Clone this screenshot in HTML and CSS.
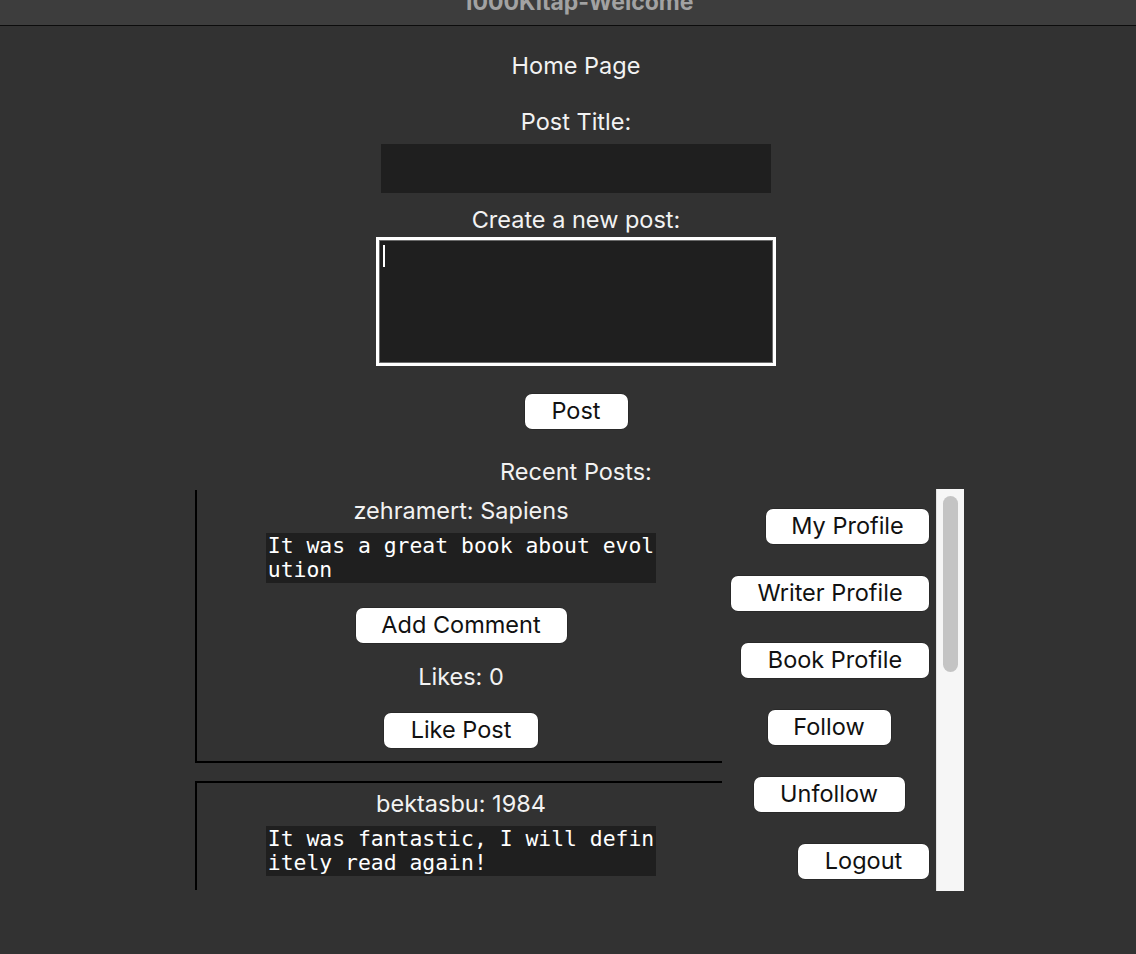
FILE: index.html
```html
<!DOCTYPE html>
<html lang="en">
<head>
    <meta charset="UTF-8">
    <meta name="viewport" content="width=device-width, initial-scale=1.0">
    <title>1000Kitap-Welcome</title>
    <link rel="stylesheet" href="styles.css">
</head>
<body>
    <div class="titlebar">
        <div class="window-title">1000Kitap-Welcome</div>
    </div>

    <div class="app">
        <div class="label label-home">Home Page</div>

        <div class="label label-title">Post Title:</div>
        <div class="entry"></div>

        <div class="label label-create">Create a new post:</div>
        <div class="textbox"><span class="caret"></span></div>

        <button class="btn btn-post">Post</button>

        <div class="label label-recent">Recent Posts:</div>

        <div class="feed-row">
            <div class="feed">
                <div class="post">
                    <div class="post-head">zehramert: Sapiens</div>
                    <div class="post-body">It was a great book about evolution</div>
                    <button class="btn btn-comment">Add Comment</button>
                    <div class="post-likes">Likes: 0</div>
                    <button class="btn btn-like">Like Post</button>
                </div>
                <div class="post">
                    <div class="post-head">bektasbu: 1984</div>
                    <div class="post-body">It was fantastic, I will definitely read again!</div>
                </div>
            </div>

            <div class="side-menu">
                <button class="btn btn-myprofile">My Profile</button>
                <button class="btn btn-writer">Writer Profile</button>
                <button class="btn btn-book">Book Profile</button>
                <button class="btn btn-follow">Follow</button>
                <button class="btn btn-unfollow">Unfollow</button>
                <button class="btn btn-logout">Logout</button>
            </div>

            <div class="scrollbar">
                <div class="scroll-thumb"></div>
            </div>
        </div>
    </div>
</body>
</html>
```

FILE: styles.css
```css
body {
    margin: 0;
    background-color: #323232;
    font-family: Inter, "Noto Sans", "Liberation Sans", sans-serif;
    color: #f2f2f2;
    overflow: hidden;
}
.titlebar {
    height: 25px;
    background: #3d3d3d;
    border-bottom: 1px solid #0c0c0c;
    overflow: hidden;
    text-align: center;
}
.window-title {
    margin-top: -11px;
    margin-left: 20px;
    line-height: 26px;
    font-size: 23px;
    font-weight: bold;
    color: #a2a2a2;
}
.app {
    width: 800px;
    margin-left: 176px;
    display: flex;
    flex-direction: column;
    align-items: center;
}
.label {
    font-size: 23.5px;
    line-height: 28px;
}
.label-home {
    margin-top: 26px;
}
.label-title {
    margin-top: 28px;
}
.label-create {
    margin-top: 13px;
}
.label-recent {
    margin-top: 29px;
}
.entry {
    width: 390px;
    height: 49px;
    margin-top: 8px;
    background: #1f1f1f;
}
.textbox {
    box-sizing: border-box;
    width: 400px;
    height: 129px;
    margin-top: 3px;
    padding: 5px 4px;
    background: #1f1f1f;
    border: 3px solid #fff;
    box-shadow: inset 0 0 0 1px #6b6b6b;
}
.caret {
    display: block;
    width: 2px;
    height: 22px;
    background: #fff;
}
.btn {
    box-sizing: border-box;
    height: 35px;
    padding: 0 0 1px;
    background: #fff;
    color: #111;
    border: none;
    border-radius: 7px;
    box-shadow: 0 0 0 0.5px rgba(0,0,0,0.35);
    font-family: inherit;
    font-size: 23.5px;
    line-height: 34px;
    text-align: center;
}
.btn-post {
    width: 103px;
    margin-top: 28px;
}
.feed-row {
    align-self: stretch;
    display: flex;
    gap: 7px;
    height: 402px;
    margin-top: 3px;
    padding-left: 19px;
}
.feed {
    width: 527px;
    height: 400px;
    margin-top: 1px;
    overflow: hidden;
}
.post {
    box-sizing: border-box;
    width: 532px;
    min-height: 275px;
    margin-bottom: 18px;
    padding: 7px 0 13px;
    border: 2px solid #000;
    display: flex;
    flex-direction: column;
    align-items: center;
}
.post:first-child {
    margin-top: -2px;
}
.post-head {
    font-size: 23.5px;
    line-height: 28px;
}
.post-body {
    width: 30ch;
    height: 48px;
    margin-top: 8px;
    padding: 1px 2px;
    background: #1f1f1f;
    color: #fff;
    font-family: "DejaVu Sans Mono", "Liberation Mono", monospace;
    font-size: 21.4px;
    line-height: 24px;
    word-break: break-all;
}
.btn-comment {
    width: 211px;
    margin-top: 25px;
}
.post-likes {
    margin-top: 20px;
    font-size: 23.5px;
    line-height: 28px;
}
.btn-like {
    width: 154px;
    margin-top: 22px;
}
.side-menu {
    width: 200px;
    padding-top: 20px;
    display: flex;
    flex-direction: column;
    align-items: flex-end;
    gap: 32px;
}
.btn-myprofile {
    width: 163px;
}
.btn-writer {
    width: 198px;
}
.btn-book {
    width: 188px;
}
.btn-follow {
    width: 123px;
    align-self: center;
}
.btn-unfollow {
    width: 151px;
    align-self: center;
}
.btn-logout {
    width: 131px;
}
.scrollbar {
    box-sizing: border-box;
    width: 28px;
    height: 402px;
    padding: 7px 0 0 6px;
    background: #f6f6f6;
    border-left: 1px solid #e2e2e2;
}
.scroll-thumb {
    width: 15px;
    height: 176px;
    border-radius: 8px;
    background: #c4c4c4;
}
```
